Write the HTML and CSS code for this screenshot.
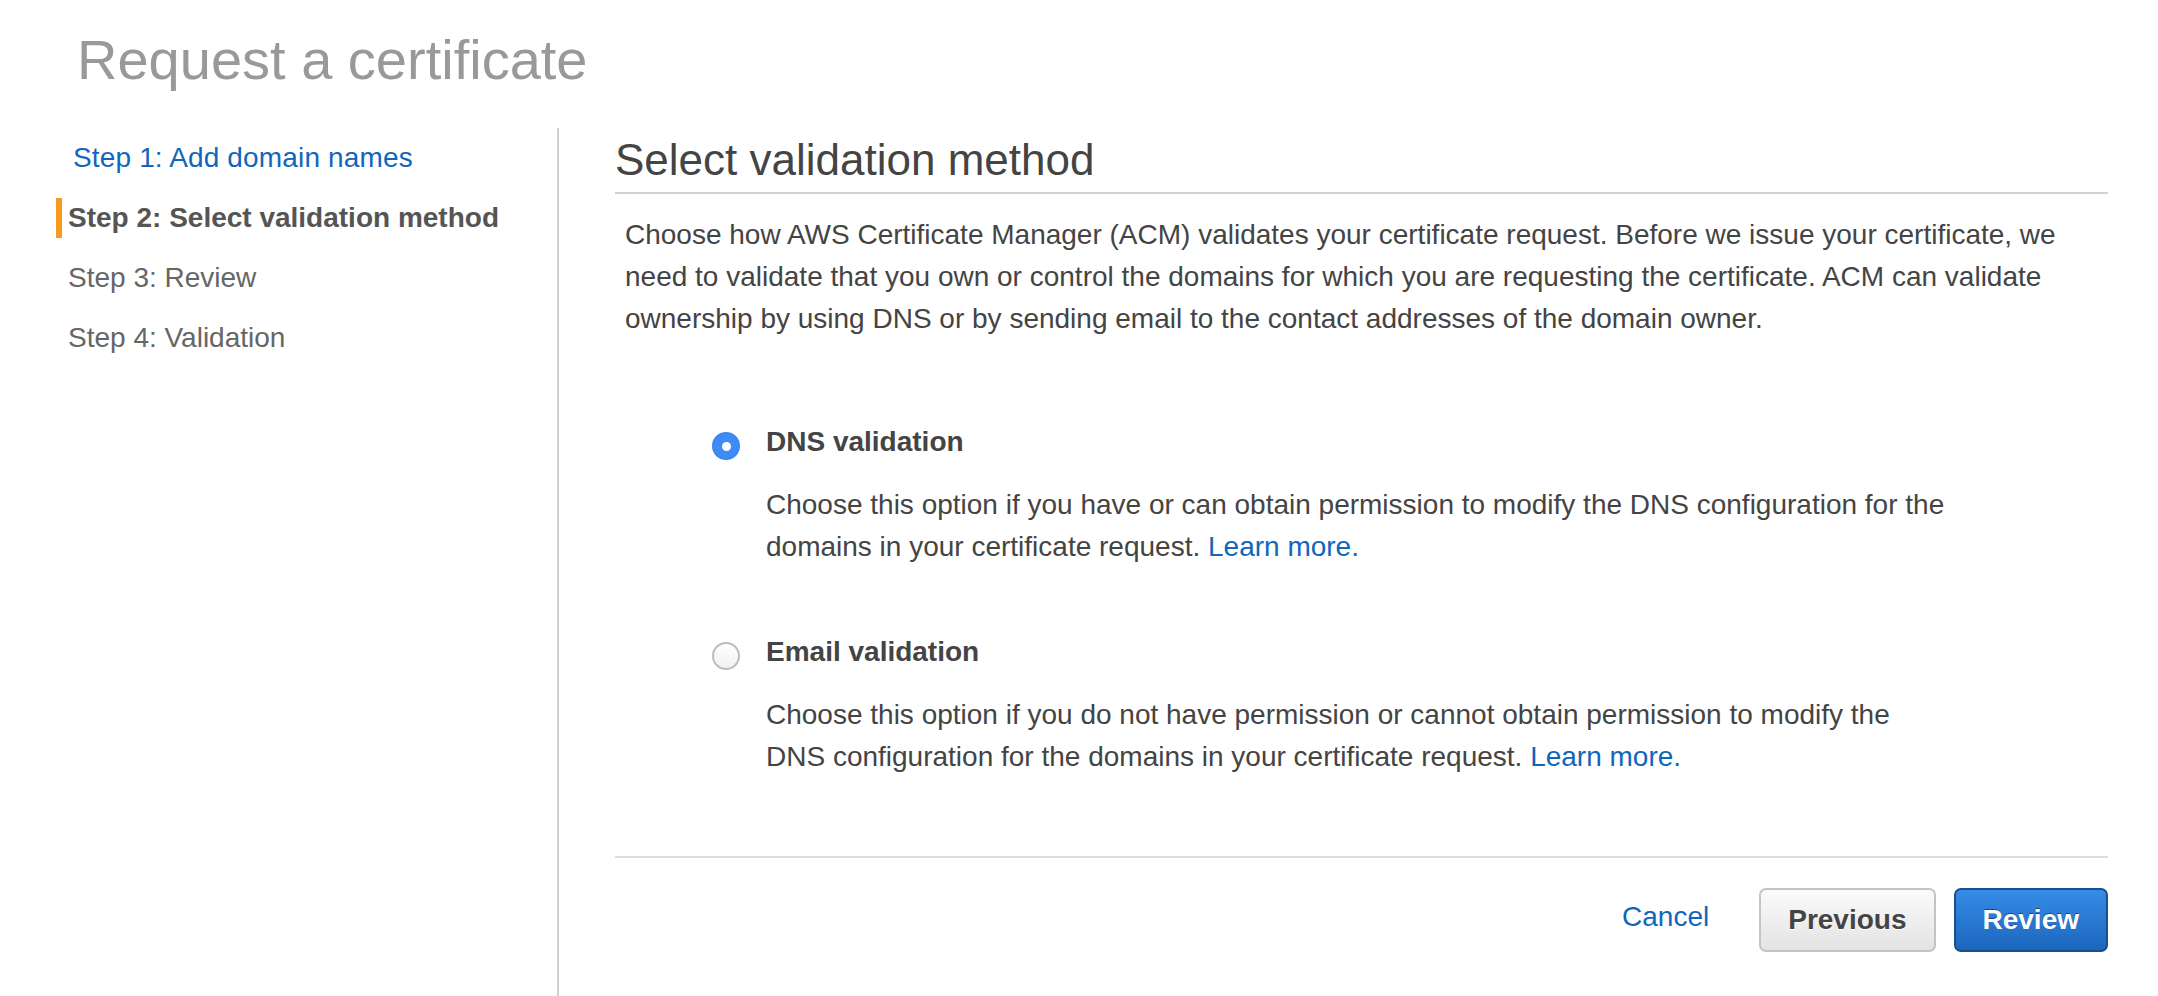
FILE: index.html
```html
<!DOCTYPE html>
<html lang="en">
<head>
<meta charset="utf-8">
<title>Request a certificate</title>
<link rel="stylesheet" href="styles.css">
</head>
<body>
<div class="page">
  <header class="page-header">
    <h1 class="page-title">Request a certificate</h1>
  </header>
  <div class="layout">
    <nav class="steps">
      <a class="step step-link" href="#">Step 1: Add domain names</a>
      <div class="step step-active">Step 2: Select validation method</div>
      <div class="step">Step 3: Review</div>
      <div class="step">Step 4: Validation</div>
    </nav>
    <main class="content">
      <h2 class="section-title">Select validation method</h2>
      <p class="intro">Choose how AWS Certificate Manager (ACM) validates your certificate request. Before we issue your certificate, we need to validate that you own or control the domains for which you are requesting the certificate. ACM can validate ownership by using DNS or by sending email to the contact addresses of the domain owner.</p>
      <div class="options">
        <div class="option">
          <span class="radio radio-checked"></span>
          <div class="option-body">
            <div class="option-label">DNS validation</div>
            <p class="option-desc">Choose this option if you have or can obtain permission to modify the DNS configuration for the domains in your certificate request. <a class="link" href="#">Learn more.</a></p>
          </div>
        </div>
        <div class="option">
          <span class="radio"></span>
          <div class="option-body">
            <div class="option-label">Email validation</div>
            <p class="option-desc">Choose this option if you do not have permission or cannot obtain permission to modify the DNS configuration for the domains in your certificate request. <a class="link" href="#">Learn more.</a></p>
          </div>
        </div>
      </div>
      <div class="actions">
        <a class="link cancel" href="#">Cancel</a>
        <button class="btn btn-secondary" type="button">Previous</button>
        <button class="btn btn-primary" type="button">Review</button>
      </div>
    </main>
  </div>
</div>
</body>
</html>
```

FILE: styles.css
```css
* { box-sizing: border-box; }

html, body {
  margin: 0;
  padding: 0;
  background: #ffffff;
}

body {
  font-family: "Liberation Sans", Arial, Helvetica, sans-serif;
  color: #444444;
}

.page {
  padding-right: 50px;
}

.page-header {
  padding-left: 77px;
  height: 128px;
  padding-top: 26px;
}

.page-title {
  margin: 0;
  font-size: 56px;
  line-height: 68px;
  font-weight: normal;
  color: #999999;
}

.layout {
  display: flex;
  min-height: 868px;
}

.steps {
  width: 559px;
  flex: none;
  border-right: 2px solid #d0d0d0;
  padding-top: 10px;
  padding-left: 56px;
  display: flex;
  flex-direction: column;
  align-items: flex-start;
  gap: 20px;
}

.step {
  display: block;
  font-size: 28px;
  line-height: 40px;
  height: 40px;
  color: #666666;
  border-left: 6px solid transparent;
  padding-left: 6px;
  white-space: nowrap;
}

.step-link {
  color: #1166bb;
  text-decoration: none;
  margin-left: 5px;
  letter-spacing: 0.15px;
}

.step-active {
  font-weight: bold;
  color: #555555;
  border-left-color: #f89b1e;
}

.content {
  flex: 1;
  padding-left: 56px;
  padding-top: 6px;
}

.section-title {
  margin: 0;
  font-size: 44px;
  line-height: 52px;
  font-weight: normal;
  color: #444444;
  padding-bottom: 6px;
  border-bottom: 2px solid #d2d2d2;
}

.intro {
  margin: 20px 0 0 0;
  padding-left: 10px;
  font-size: 28px;
  line-height: 42px;
  color: #444444;
}

.options {
  margin-top: 82px;
  padding-left: 97px;
  display: flex;
  flex-direction: column;
  gap: 64px;
}

.option {
  display: flex;
  align-items: flex-start;
  gap: 26px;
}

.radio {
  flex: none;
  width: 28px;
  height: 28px;
  margin-top: 10px;
  border-radius: 50%;
  border: 2px solid #bdbdbd;
  background: linear-gradient(#ffffff, #f1f1f1);
  display: flex;
  align-items: center;
  justify-content: center;
}

.radio-checked {
  border-color: #3c87f2;
  background: #3f8af5;
}

.radio-checked::after {
  content: "";
  width: 9px;
  height: 9px;
  border-radius: 50%;
  background: #ffffff;
}

.option-label {
  font-size: 28px;
  line-height: 40px;
  font-weight: bold;
  color: #444444;
}

.option-desc {
  margin: 22px 0 0 0;
  max-width: 1185px;
  font-size: 28px;
  line-height: 42px;
  color: #444444;
}

.link {
  color: #1166bb;
  text-decoration: none;
}

.actions {
  margin-top: 78px;
  border-top: 2px solid #dddddd;
  padding-top: 30px;
  display: flex;
  justify-content: flex-end;
  align-items: center;
}

.cancel {
  font-size: 28px;
  line-height: 40px;
  margin-right: 50px;
  margin-bottom: 6px;
}

.btn {
  font-family: "Liberation Sans", Arial, Helvetica, sans-serif;
  font-size: 28px;
  font-weight: bold;
  height: 64px;
  padding: 0 27px;
  border-radius: 7px;
  border: 2px solid;
  cursor: pointer;
}

.btn-secondary {
  color: #444444;
  background: linear-gradient(#fbfbfb, #e3e3e3);
  border-color: #c4c4c4;
  text-shadow: 0 1px 0 #ffffff;
}

.btn-primary {
  margin-left: 18px;
  color: #ffffff;
  background: linear-gradient(#368ce6, #1c66bd);
  border-color: #1a4f8c;
  text-shadow: 0 -1px 0 rgba(0, 0, 0, 0.45);
}
```
